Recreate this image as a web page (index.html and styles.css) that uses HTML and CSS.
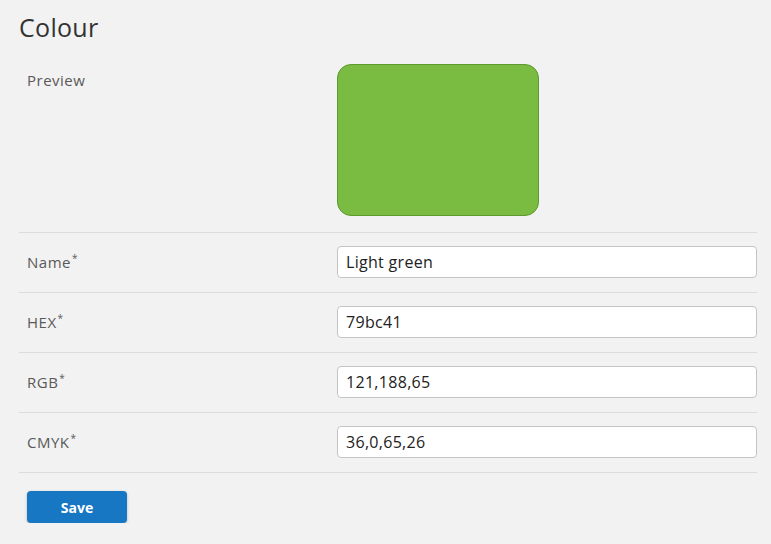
FILE: index.html
```html
<!DOCTYPE html>
<html>
<head>
<meta charset="utf-8">
<link rel="stylesheet" href="styles.css">
</head>
<body>
<div class="page">
  <h1 class="title">Colour</h1>
  <div class="row row-preview">
    <div class="label">Preview</div>
    <div class="field"><div class="swatch"></div></div>
  </div>
  <div class="row">
    <div class="label">Name<sup>*</sup></div>
    <div class="field"><input class="input" type="text" value="Light green"></div>
  </div>
  <div class="row">
    <div class="label">HEX<sup>*</sup></div>
    <div class="field"><input class="input" type="text" value="79bc41"></div>
  </div>
  <div class="row">
    <div class="label">RGB<sup>*</sup></div>
    <div class="field"><input class="input" type="text" value="121,188,65"></div>
  </div>
  <div class="row row-last">
    <div class="label">CMYK<sup>*</sup></div>
    <div class="field"><input class="input" type="text" value="36,0,65,26"></div>
  </div>
  <div class="actions">
    <button class="btn" type="button">Save</button>
  </div>
</div>
</body>
</html>
```
FILE: styles.css
```css
html, body {
  margin: 0;
  padding: 0;
  background: #f2f2f2;
}
body {
  font-family: "Open Sans", "Noto Sans", sans-serif;
  color: #555;
}
.page {
  padding: 12px 14px 0 19px;
}
.title {
  margin: 0 0 6px 0;
  font-size: 25px;
  line-height: 30px;
  font-weight: 400;
  letter-spacing: 0.3px;
  color: #333;
}
.row {
  display: grid;
  grid-template-columns: 310px 1fr;
  padding: 13px 0 14px 8px;
  border-top: 1px solid #dcdcdc;
}
.row-preview {
  border-top: none;
  padding: 16px 0 16px 8px;
}
.row-last {
  border-bottom: 1px solid #dcdcdc;
}
.label {
  font-size: 15px;
  line-height: 32px;
  letter-spacing: 0.5px;
  color: #595959;
}
.label sup {
  font-size: 10px;
  line-height: 0;
  vertical-align: 6px;
  margin-left: 1px;
}
.swatch {
  width: 200px;
  height: 150px;
  background: #79bc41;
  border: 1px solid #5f9a30;
  border-radius: 14px;
}
.input {
  box-sizing: border-box;
  width: 100%;
  height: 32px;
  margin: 0;
  padding: 0 8px;
  border: 1px solid #c4c4c4;
  border-radius: 4px;
  background: #fff;
  font-family: "Open Sans", "Noto Sans", sans-serif;
  font-size: 16px;
  letter-spacing: 0.3px;
  color: #222;
  outline: none;
}
.actions {
  padding: 18px 0 0 8px;
}
.btn {
  width: 100px;
  height: 32px;
  border: none;
  border-radius: 4px;
  background: #1777c2;
  color: #fff;
  font-family: "Open Sans", "Noto Sans", sans-serif;
  font-size: 14px;
  font-weight: 700;
  box-shadow: 0 1px 3px rgba(0,0,0,0.25);
  cursor: pointer;
}
```
